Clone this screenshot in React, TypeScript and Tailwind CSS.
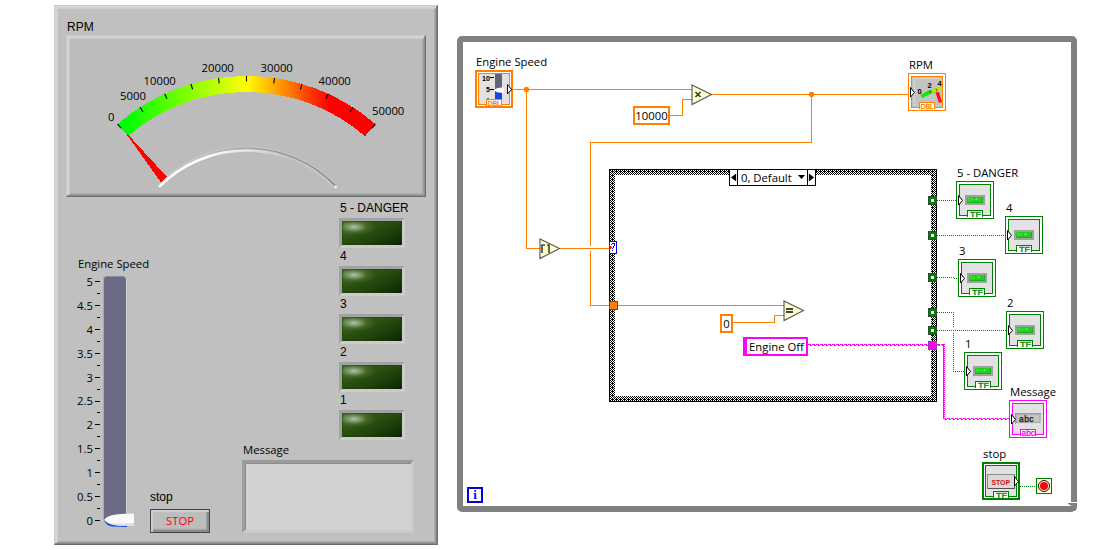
import React from "react";

const UI = "font-['Open_Sans','Noto_Sans',sans-serif] text-[11.3px] leading-4 whitespace-nowrap text-black";
const ARIAL = "font-['Liberation_Sans',Arial,sans-serif] text-[12px] leading-4 whitespace-nowrap text-black";
const MINI = "font-['Liberation_Sans',Arial,sans-serif]";

/* ---------- Front panel ---------- */

const CX = 180.5;
const CY = 238;

const polar = (radius: number, degrees: number) => {
  const a = (degrees * Math.PI) / 180;
  return [CX + radius * Math.sin(a), CY - radius * Math.cos(a)];
};

const METER_LABELS = [
  { text: "0", x: 42, y: 86 },
  { text: "5000", x: 54, y: 65 },
  { text: "10000", x: 77.5, y: 49.5 },
  { text: "20000", x: 135.5, y: 36.5 },
  { text: "30000", x: 194.5, y: 36.5 },
  { text: "40000", x: 252.5, y: 49.5 },
  { text: "50000", x: 306, y: 79.5 },
];

function band(outer: number, inner: number, span: number) {
  const [ax, ay] = polar(outer, -span);
  const [bx, by] = polar(outer, span);
  const [cx, cy] = polar(inner, span);
  const [dx, dy] = polar(inner, -span);
  return `M${ax} ${ay}A${outer} ${outer} 0 0 1 ${bx} ${by}L${cx} ${cy}A${inner} ${inner} 0 0 0 ${dx} ${dy}Z`;
}

function Meter() {
  const ticks = Array.from({ length: 11 }, (_, i) => -40.9 + i * 8.18);
  return (
    <div className="h-[162px] w-[360px] border border-t-[#cacaca] border-l-[#cacaca] border-r-[#6e6e6e] border-b-[#6e6e6e] bg-[#bcbcbc] shadow-[inset_-1px_-1px_0_#8c8c8c,inset_2px_2px_0_#d3d3d3,inset_-2px_-2px_0_#9c9c9c,inset_3px_3px_0_#c9c9c9,inset_-3px_-3px_0_#aeaeae]">
      <svg className="-m-px block h-[162px] w-[360px]" viewBox="0 0 360 162">
        <defs>
          <linearGradient id="scale" gradientUnits="userSpaceOnUse" x1="60" x2="311" y1="0" y2="0">
            <stop offset="0" stopColor="#00ff00" />
            <stop offset="0.48" stopColor="#ffff00" />
            <stop offset="0.81" stopColor="#ff0000" />
            <stop offset="1" stopColor="#ff0000" />
          </linearGradient>
          <linearGradient id="hubLight" gradientUnits="userSpaceOnUse" x1="92" x2="270" y1="0" y2="0">
            <stop offset="0" stopColor="#fff" />
            <stop offset="0.25" stopColor="#fff" />
            <stop offset="0.6" stopColor="#d6d6d6" />
            <stop offset="0.85" stopColor="#b8b8b8" stopOpacity="0" />
          </linearGradient>
          <linearGradient id="hubDark" gradientUnits="userSpaceOnUse" x1="92" x2="270" y1="0" y2="0">
            <stop offset="0.2" stopColor="#aaa" stopOpacity="0" />
            <stop offset="0.45" stopColor="#a4a4a4" />
            <stop offset="1" stopColor="#7c7c7c" />
          </linearGradient>
        </defs>
        <path d={band(197, 181, 40.9)} fill="url(#scale)" shapeRendering="crispEdges" />
        {ticks.map((deg) => {
          const [x1, y1] = polar(197, deg);
          const [x2, y2] = polar(191.5, deg);
          return <line key={deg} x1={x1} y1={y1} x2={x2} y2={y2} stroke="#000" strokeWidth="1.1" />;
        })}
        <path d="M93 150.5A122 122 0 0 1 268 150.5" fill="none" stroke="#cccccc" strokeWidth="4.5" opacity="0.6" />
        <path d="M93 152A122 122 0 0 1 267 152" fill="none" stroke="url(#hubLight)" strokeWidth="2.4" />
        <path d="M93 150A123 123 0 0 1 269 150.5" fill="none" stroke="url(#hubDark)" strokeWidth="1.2" />
        <circle cx="269.5" cy="152" r="1.5" fill="#ececec" />
        <polygon points="60,98.5 61.5,99 101,142 95,147.5" fill="#f00" shapeRendering="crispEdges" />
        {METER_LABELS.map((l) => (
          <text key={l.text} x={l.x} y={l.y} className={UI} fill="#000">
            {l.text}
          </text>
        ))}
      </svg>
    </div>
  );
}

function Slider() {
  const marks = ["5", "4.5", "4", "3.5", "3", "2.5", "2", "1.5", "1", "0.5", "0"];
  return (
    <div className="flex">
      <div className="-mt-0.5 flex h-[255px] w-[24px] flex-col justify-between text-right">
        {marks.map((m) => (
          <div key={m} className={`flex h-4 items-center justify-end ${UI}`}>
            {m}
          </div>
        ))}
      </div>
      <svg className="ml-[2px] block h-[255px] w-[5px]" viewBox="0 0 5 255" shapeRendering="crispEdges">
        {Array.from({ length: 21 }, (_, i) => (
          <rect key={i} x={i % 2 ? 2 : 0} y={Math.round(5 + i * 11.95)} width={i % 2 ? 3 : 5} height="1" fill="#000" />
        ))}
      </svg>
      <svg className="ml-[3px] block h-[256px] w-[34px]" viewBox="0 0 34 256">
        <rect x="0.5" y="0.5" width="23.5" height="246" rx="4" fill="#d2d2d2" />
        <rect x="0" y="-0.5" width="23" height="246" rx="4" fill="#a8a8a8" />
        <rect x="1" y="0.5" width="22" height="246" rx="3.5" fill="#6b6b85" />
        <path d="M1 244Q3 250 10 250.500L24 251V247L3 241Z" fill="#174be0" />
        <path d="M1 244Q3 239 18 238L31 237.500V249.500L19 249.800Q5 249 1 244Z" fill="#fafafa" />
        <path d="M4 247Q12 248 31 247V249.500L19 249.800Q9 249.500 4 247Z" fill="#dedede" />
      </svg>
    </div>
  );
}

function Led({ label }: { label: string }) {
  return (
    <div className="h-12">
      <div className={`h-[18px] pl-[1px] ${ARIAL}`}>{label}</div>
      <div className="h-[30px] w-[66px] border-[3px] border-t-[#a2a2a2] border-l-[#a2a2a2] border-r-[#cccccc] border-b-[#cccccc]">
        <div className="h-6 w-[60px] bg-[radial-gradient(ellipse_22px_9px_at_12px_6px,rgba(190,205,180,0.9)_0%,rgba(160,182,145,0.65)_30%,rgba(110,145,85,0.3)_60%,rgba(80,115,50,0)_100%),linear-gradient(155deg,#3b6a1e_0%,#2d5513_35%,#1f410a_65%,#0f2402_100%)] shadow-[inset_0_0_2px_#183605]" />
      </div>
    </div>
  );
}

function FrontPanel() {
  return (
    <section className="mt-[5px] ml-[54px] h-[540px] w-[384px] shrink-0 border border-t-[#cccccc] border-l-[#cccccc] border-r-[#6a6a6a] border-b-[#6a6a6a] bg-[#c0c0c0] p-[3px] shadow-[inset_-1px_-1px_0_#868686,inset_2px_2px_0_#d5d5d5,inset_-2px_-2px_0_#979797,inset_3px_3px_0_#cfcfcf,inset_-3px_-3px_0_#adadad]">
      <div className="pt-[10px] pl-2">
        <div className={`h-4 pl-[1px] ${ARIAL}`}>RPM</div>
        <Meter />
      </div>
      <div className="flex justify-between pr-[29px] pl-5">
        <div className="pt-[59px]">
          <div className={`mb-[4px] h-4 ${UI}`}>Engine Speed</div>
          <div className="flex">
            <div className="-ml-[9px]">
              <Slider />
            </div>
            <div className="mt-[213px] ml-[13px]">
              <div className={`h-[20px] ${ARIAL}`}>stop</div>
              <button className={`block h-6 w-[60px] border border-[#444] bg-[#bdbdbd] text-center shadow-[inset_2px_2px_1px_#d0d0d0,inset_-2px_-2px_1px_#8a8a8a,inset_-3px_-3px_1px_#a4a4a4] ${UI}`}>
                <span className="text-[#ff0000]">STOP</span>
              </button>
            </div>
          </div>
        </div>
        <div className="-mr-[9px] flex w-[172px] flex-col pt-[3px]">
          <div className="pl-[97px]">
            {["5 - DANGER", "4", "3", "2", "1"].map((l) => (
              <Led key={l} label={l} />
            ))}
          </div>
          <div className={`mt-[2px] h-[18px] pl-[1px] ${UI}`}>Message</div>
          <div className="h-[73px] w-[172px] border-[3px] border-t-[#9a9a9a] border-l-[#9e9e9e] border-r-[#cbcbcb] border-b-[#cbcbcb] bg-[#d2d2d2] shadow-[inset_1px_1px_0_#8c8c8c]" />
        </div>
      </div>
    </section>
  );
}

/* ---------- Block diagram ---------- */

const X0 = 457;
const Y0 = 36;
const at = (x: number, y: number) => ({ left: x - X0, top: y - Y0 });

type Kind = "slide" | "meter" | "led" | "string" | "stop";

const TERMINALS: { label: string; kind: Kind; x: number; y: number }[] = [
  { label: "Engine Speed", kind: "slide", x: 475, y: 70 },
  { label: "RPM", kind: "meter", x: 908, y: 73 },
  { label: "5 - DANGER", kind: "led", x: 956, y: 181 },
  { label: "4", kind: "led", x: 1005, y: 216 },
  { label: "3", kind: "led", x: 958, y: 259 },
  { label: "2", kind: "led", x: 1006, y: 311 },
  { label: "1", kind: "led", x: 964, y: 352 },
  { label: "Message", kind: "string", x: 1009, y: 400 },
  { label: "stop", kind: "stop", x: 982, y: 462 },
];

const COLORS: Record<Kind, string> = {
  slide: "#ff8000",
  meter: "#ff8000",
  led: "#008000",
  string: "#ff00ff",
  stop: "#008000",
};

const TYPES: Record<Kind, string> = { slide: "DBL", meter: "DBL", led: "TF", string: "abc", stop: "TF" };

function TerminalArt({ kind }: { kind: Kind }) {
  if (kind === "slide")
    return (
      <g>
        <g className={MINI} fontSize="7" fontWeight="700" fill="#000">
          <text x="7" y="11" textLength="8" lengthAdjust="spacingAndGlyphs">10</text>
          <text x="11" y="22">5</text>
        </g>
        <path d="M15 7.500h4M15 19.500h4M13 29v-1" stroke="#000" />
        <rect x="20" y="4" width="7" height="27" fill="#646478" />
        <rect x="20" y="21" width="7" height="10" fill="#1747d8" />
        <path d="M19 20.500q2-3.500 10-3v5q-7 1-10-2Z" fill="#fff" />
      </g>
    );
  if (kind === "meter")
    return (
      <g>
        <rect x="4" y="4" width="30" height="30" fill="#c4c4c4" />
        <path d="M6.500 32V5.500H34" fill="none" stroke="#e8e8e8" strokeDasharray="1 1" />
        <path d="M13.500 23.500Q20 19 27 17.500" fill="none" stroke="#00f000" strokeWidth="3.500" />
        <path d="M24 18.500Q30 15.500 34 15.500" fill="none" stroke="#b8e800" strokeWidth="3.500" />
        <path d="M22 17v3M28 15.500l1 3" stroke="#555" />
        <path d="M27.500 19.500L31 19L34 29L31 30Z" fill="#ff1010" />
        <g className={MINI} fontSize="7.500" fontWeight="700" fill="#000">
          <text x="9.500" y="21">0</text>
          <text x="19.500" y="15">2</text>
          <text x="29.500" y="13">4</text>
        </g>
      </g>
    );
  if (kind === "led")
    return (
      <g shapeRendering="crispEdges">
        <rect x="9" y="14" width="20" height="10" fill="#a0a0a0" />
        <rect x="11" y="16" width="16" height="6" fill="#1fd01f" />
        <path d="M12 17.500h2M15 18.500h2M19 18.500h3M13 19.500h1M20 17.500h1" stroke="#52f052" />
        <path d="M11 21.500h16M26.500 16v6" stroke="#18b018" />
      </g>
    );
  if (kind === "string")
    return (
      <g>
        <rect x="6" y="13" width="26" height="11" fill="#9c9c9c" />
        <path d="M7 23.500h25v-9" stroke="#ddd" fill="none" />
        <rect x="7.500" y="14.500" width="23" height="8" fill="#c4c4c4" />
        <text x="10" y="22" className={MINI} fontSize="8.500" stroke="#111" strokeWidth="0.25" textLength="14.500" fill="#111">
          abc
        </text>
      </g>
    );
  return (
    <g>
      <rect x="5.500" y="12.500" width="27" height="14" fill="#dcd8d8" stroke="#8a8a8a" />
      <path d="M6 26.500h26.500v-13" stroke="#555" fill="none" />
      <text x="9.500" y="22.500" className={MINI} fontSize="7.500" fontWeight="700" textLength="18.500" lengthAdjust="spacingAndGlyphs" fill="#d01010">
        STOP
      </text>
    </g>
  );
}

function Terminal({ kind }: { kind: Kind }) {
  const c = COLORS[kind];
  const control = kind === "slide" || kind === "stop";
  const wide = kind !== "led" && kind !== "stop";
  return (
    <svg className="block h-[38px] w-[38px]" viewBox="0 0 38 38">
      <g shapeRendering="crispEdges">
        <rect width="38" height="38" fill={c} />
        {control ? <rect x="2" y="2" width="34" height="34" fill="#fff" /> : <rect x="1" y="1" width="36" height="36" fill="#fff" />}
        <rect x="3" y="3" width="32" height="32" fill={c} />
        <rect x="4" y="4" width="30" height="30" fill="#e2e2e2" />
      </g>
      <TerminalArt kind={kind} />
      <g shapeRendering="crispEdges">
        <rect x="11" y="29" width="16" height="7" fill={c} />
        <rect x="12" y="30" width="14" height="7" fill="#fff" />
        {control && <rect x="11" y="36" width="16" height="2" fill={c} />}
      </g>
      <text
        x={wide ? 12.5 : 14}
        y={wide ? 36.2 : 36}
        className={MINI}
        fontSize={kind === "string" ? 8.5 : 7}
        textLength={wide ? 13.5 : 11}
        lengthAdjust={wide ? "spacing" : "spacingAndGlyphs"}
        fill={c}
        stroke={c}
        strokeWidth="0.3"
      >
        {TYPES[kind]}
      </text>
      <path d={control ? "M32.500 14.500V24L36.500 19.500Z" : "M2.500 14.500V24L6.500 19.500Z"} fill="#fff" stroke="#000" />
    </svg>
  );
}

function Triangle({ x, y, children }: { x: number; y: number; children: React.ReactNode }) {
  return (
    <svg className="absolute block h-[22px] w-[23px]" style={at(x, y)} viewBox="0 0 23 22">
      <path d="M1 1L20.500 10.500L1 20.500Z" fill="#ffffcc" stroke="#555" strokeWidth="1.100" />
      {children}
    </svg>
  );
}

function Wires() {
  const tunnels = [196, 231, 273, 308, 326];
  return (
    <svg className="absolute top-0 left-0 block h-[478px] w-[621px]" viewBox="457 36 621 478" fill="none">
      <defs>
        <pattern id="weave" width="4" height="4" patternUnits="userSpaceOnUse">
          <rect width="4" height="4" fill="#fff" />
          <path d="M0 0h1v1h-1zM2 0h1v1h-1zM1 1h1v1h-1zM3 1h1v1h-1zM0 2h1v1h-1zM2 2h1v1h-1zM0 3h2v1h-2zM3 3h1v1h-1z" fill="#000" />
        </pattern>
      </defs>
      <g shapeRendering="crispEdges">
        <rect x="612" y="172" width="322" height="227" stroke="url(#weave)" strokeWidth="6" />
        <rect x="609.500" y="169.500" width="327" height="232" stroke="#000" />
        <g stroke="#ff8000">
          <path d="M513 89.500H692M526.500 89.500V248.500H540M560 248.500H610" />
          <path d="M712 94.500H908M811.500 94.500V142.500H590.500V246M590.500 251V305.500H610M618 305.500H784" />
          <path d="M669 115.500H682.500V99.500H692M733 322.500H774.500V315.500H784" />
        </g>
        <g stroke="#008000" strokeDasharray="1 1">
          <path d="M937 200.500H957M937 235.500H1006M937 277.500H954M954 278.500H959M937 312.500H953.500V328M953.500 333V371.500H965M937 330.500H1007M1020 486.500H1036" />
        </g>
        <g stroke="#ff00ff">
          <path d="M808 344.500H929M937 344.500H944" strokeDasharray="3 1" />
          <path d="M810 345.500H929M938 345.500H944" strokeDasharray="2 2" />
          <path d="M943.500 344V419" />
          <path d="M944.500 344V419" strokeDasharray="1 1" />
          <path d="M943 418.500H1010" strokeDasharray="3 1" />
          <path d="M945 419.500H1010" strokeDasharray="2 2" />
        </g>
        <rect x="928.500" y="341.500" width="8" height="8" fill="#ff00ff" stroke="#963c96" />
        <rect x="609.500" y="301.500" width="8" height="8" fill="#ff8000" stroke="#64462a" />
        {tunnels.map((y) => (
          <g key={y}>
            <rect x="928" y={y} width="9" height="9" fill="#2b4b2b" />
            <rect x="929" y={y + 1} width="7" height="7" fill="#008000" />
            <rect x="931" y={y + 3} width="3" height="3" fill="#fff" />
          </g>
        ))}
      </g>
      <circle cx="526.500" cy="89.500" r="2.700" fill="#ff8000" />
      <circle cx="811.500" cy="94.500" r="2.700" fill="#ff8000" />
    </svg>
  );
}

function BlockDiagram() {
  return (
    <section className="relative mt-[36px] ml-[19px] h-[476px] w-[620px] shrink-0">
      <div className="h-full w-full rounded-[5px] border-[6px] border-[#808080] bg-white" />
      <svg className="absolute right-0 bottom-0 block h-[10px] w-[10px]" viewBox="0 0 10 10" shapeRendering="crispEdges">
        <rect x="3" y="0" width="7" height="1" fill="#fff" />
        <path d="M1 1h9v1h-9zM2 2h2v1h-2z" fill="#808080" />
        <path d="M6 9h4v1h-4z" fill="#fff" />
      </svg>
      <Wires />
      {TERMINALS.map((t) => (
        <div key={t.label} className="absolute" style={at(t.x, t.y - 16)}>
          <div className={`h-4 w-0 pl-[1px] ${UI}`}>{t.label}</div>
          <Terminal kind={t.kind} />
        </div>
      ))}
      <Triangle x={691} y={84}>
        <path d="M4.500 8L9.500 13M9.500 8L4.500 13" stroke="#333" strokeWidth="1.500" />
      </Triangle>
      <Triangle x={539} y={238}>
        <path d="M3 15V7h3M8 7h2v8" fill="none" stroke="#4a4a3a" strokeWidth="1.700" />
      </Triangle>
      <Triangle x={783} y={300}>
        <path d="M3 8h7v2H3zM3 11h7v2H3z" fill="#444" shapeRendering="crispEdges" />
      </Triangle>
      <div className={`absolute flex h-[19px] w-[37px] items-center justify-center border-2 border-[#ff8000] bg-white ${UI}`} style={at(633, 106)}>
        10000
      </div>
      <div className={`absolute flex h-[19px] w-[13px] items-center justify-center border-2 border-[#ff8000] bg-white ${UI}`} style={at(720, 314)}>
        0
      </div>
      <div className={`absolute flex h-[19px] w-[65px] items-center justify-center border-2 border-l-4 border-[#ff00ff] bg-white ${UI}`} style={at(743, 337)}>
        Engine Off
      </div>
      <div className="absolute flex h-[17px] w-[87px] items-center border border-black bg-white" style={at(729, 169)}>
        <svg className="h-[15px] w-2 border-r border-black" viewBox="0 0 8 15">
          <path d="M7 3V12L1 7.500Z" fill="#000" />
        </svg>
        <span className={`grow pl-[3px] ${UI}`}>0, Default</span>
        <svg className="mr-[2px] h-[15px] w-[7px]" viewBox="0 0 7 15">
          <path d="M0 5H7L3.500 9Z" fill="#000" />
        </svg>
        <svg className="h-[15px] w-2 border-l border-black" viewBox="0 0 8 15">
          <path d="M1 3V12L7 7.500Z" fill="#000" />
        </svg>
      </div>
      <svg className="absolute block h-[13px] w-[8px]" style={at(609, 241)} viewBox="0 0 8 13" shapeRendering="crispEdges">
        <rect x="0.500" y="0.500" width="7" height="12" fill="#fff" stroke="#0000ff" />
        <path d="M2 3h1v-1h3v1h-3v1h-1zM5 3h1v2h-1zM4 5h1v2h-1zM3 7h1v1h-1zM3 9h1v1h-1z" fill="#0000ff" />
        <path d="M0 4h1v1h1v1h1v1h-1v1h-1v1h-1z" fill="#f00" />
      </svg>
      <div className="absolute flex h-4 w-4 items-center justify-center border-2 border-[#0000d8] bg-white font-['Liberation_Serif',serif] text-[13px] leading-3 font-bold text-[#0000ff]" style={at(467, 487)}>
        i
      </div>
      <svg className="absolute block h-4 w-4" style={at(1036, 478)} viewBox="0 0 16 16">
        <rect x="0.500" y="0.500" width="15" height="15" fill="#ffffcc" stroke="#008000" />
        <circle cx="8" cy="8" r="5.500" fill="#fff" stroke="#111" />
        <circle cx="8" cy="8" r="4" fill="#f00" />
      </svg>
    </section>
  );
}

export default function App() {
  return (
    <main className="flex h-[550px] w-[1120px] items-start overflow-hidden bg-white">
      <FrontPanel />
      <BlockDiagram />
    </main>
  );
}
